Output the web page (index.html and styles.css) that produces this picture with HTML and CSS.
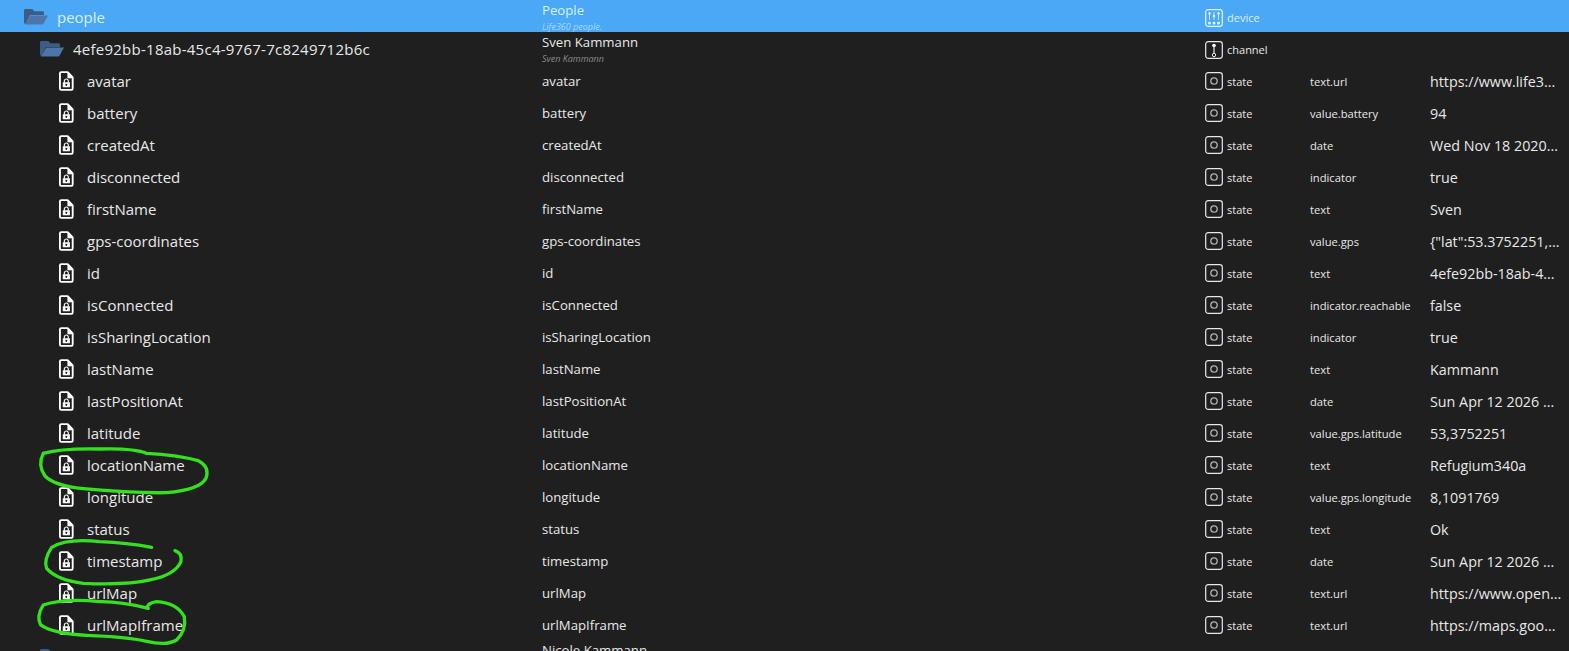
FILE: index.html
```html
<!DOCTYPE html>
<html lang="en">
  <head>
    <meta charset="UTF-8" />
    <title>Objects</title>
    <link rel="stylesheet" href="styles.css">
  </head>
  <body>
    <svg class="defs" width="0" height="0">
      <symbol id="folder" viewBox="0 0 26 17">
        <path fill="#3c5c85" d="M1 15V2.500C1 1.500 1.600 1 2.500 1h6c.8 0 1.300.3 1.800 1l1 1.200h8.200c1 0 1.500.6 1.500 1.500V7H7L2.500 16z"/>
        <path fill="#4d76a8" d="M7.200 7.400H25L20.600 15.600c-.3.5-.7.9-1.400.9H2z"/>
      </symbol>
      <symbol id="file" viewBox="0 0 16 21">
        <path fill="none" stroke="#fff" stroke-width="2" stroke-linejoin="round" d="M2.400 1h6.800l5.400 5.600v12c0 .9-.6 1.400-1.400 1.400H2.400c-.8 0-1.400-.5-1.400-1.400V2.400C1 1.500 1.600 1 2.400 1z"/>
        <path fill="#fff" d="M9 1h1l5 5v1.500H9z"/>
        <path fill="none" stroke="#fff" stroke-width="1.200" d="M5.700 12V10.500a2.100 2.100 0 0 1 4.200 0V12"/>
        <path fill="#fff" fill-rule="evenodd" d="M4 11.800h7.600v5.400H4zM7.800 13.500a1 1 0 1 0 .01 0z"/>
      </symbol>
      <symbol id="state" viewBox="0 0 18 18">
        <rect x=".7" y=".7" width="16.600" height="16.600" rx="2.500" fill="none" stroke="#e8e8e8" stroke-width="1.200"/>
        <circle cx="9" cy="9" r="3.200" fill="none" stroke="#b0b0b0" stroke-width="1.300"/>
      </symbol>
      <symbol id="channel" viewBox="0 0 18 18">
        <rect x=".7" y=".7" width="16.600" height="16.600" rx="2.500" fill="none" stroke="#e8e8e8" stroke-width="1.200"/>
        <circle cx="9" cy="4.500" r="1.800" fill="#fff"/>
        <path stroke="#e8e8e8" stroke-width="1.200" d="M9 5v7"/>
        <circle cx="9" cy="14" r="1.700" fill="none" stroke="#e8e8e8"/>
      </symbol>
      <symbol id="device" viewBox="0 0 18 18">
        <rect x=".7" y=".7" width="16.600" height="16.600" rx="2.500" fill="none" stroke="#e6f4ff" stroke-width="1.200"/>
        <g fill="#e6f4ff">
          <circle cx="4.500" cy="4.500" r="1.300"/><circle cx="9" cy="7" r="1.300"/><circle cx="13.500" cy="4.500" r="1.300"/>
          <circle cx="4.500" cy="14" r="1.500"/><circle cx="9" cy="14" r="1.500"/><circle cx="13.500" cy="14" r="1.500"/>
        </g>
        <path stroke="#e6f4ff" stroke-width=".8" d="M4.500 3v8M9 3v8M13.500 3v8"/>
      </symbol>
    </svg>

    <div class="tree">
      <div class="row selected">
        <div class="name level0"><svg class="ico-folder"><use href="#folder"/></svg><span class="folder-label">people</span></div>
        <div class="title two-line"><div>People</div><div class="sub">Life360 people.</div></div>
        <div class="type"><svg class="ico-role"><use href="#device"/></svg><span>device</span></div>
        <div class="role"></div>
        <div class="value"></div>
      </div>
      <div class="row">
        <div class="name level1"><svg class="ico-folder"><use href="#folder"/></svg><span class="folder-label uuid">4efe92bb-18ab-45c4-9767-7c8249712b6c</span></div>
        <div class="title two-line"><div>Sven Kammann</div><div class="sub">Sven Kammann</div></div>
        <div class="type"><svg class="ico-role"><use href="#channel"/></svg><span>channel</span></div>
        <div class="role"></div>
        <div class="value"></div>
      </div>
      <div class="row">
        <div class="name level2"><svg class="ico-file"><use href="#file"/></svg><span>avatar</span></div>
        <div class="title">avatar</div>
        <div class="type"><svg class="ico-role"><use href="#state"/></svg><span>state</span></div>
        <div class="role">text.url</div>
        <div class="value">https://www.life3...</div>
      </div>
      <div class="row">
        <div class="name level2"><svg class="ico-file"><use href="#file"/></svg><span>battery</span></div>
        <div class="title">battery</div>
        <div class="type"><svg class="ico-role"><use href="#state"/></svg><span>state</span></div>
        <div class="role">value.battery</div>
        <div class="value">94</div>
      </div>
      <div class="row">
        <div class="name level2"><svg class="ico-file"><use href="#file"/></svg><span>createdAt</span></div>
        <div class="title">createdAt</div>
        <div class="type"><svg class="ico-role"><use href="#state"/></svg><span>state</span></div>
        <div class="role">date</div>
        <div class="value">Wed Nov 18 2020...</div>
      </div>
      <div class="row">
        <div class="name level2"><svg class="ico-file"><use href="#file"/></svg><span>disconnected</span></div>
        <div class="title">disconnected</div>
        <div class="type"><svg class="ico-role"><use href="#state"/></svg><span>state</span></div>
        <div class="role">indicator</div>
        <div class="value">true</div>
      </div>
      <div class="row">
        <div class="name level2"><svg class="ico-file"><use href="#file"/></svg><span>firstName</span></div>
        <div class="title">firstName</div>
        <div class="type"><svg class="ico-role"><use href="#state"/></svg><span>state</span></div>
        <div class="role">text</div>
        <div class="value">Sven</div>
      </div>
      <div class="row">
        <div class="name level2"><svg class="ico-file"><use href="#file"/></svg><span>gps-coordinates</span></div>
        <div class="title">gps-coordinates</div>
        <div class="type"><svg class="ico-role"><use href="#state"/></svg><span>state</span></div>
        <div class="role">value.gps</div>
        <div class="value">{"lat":53.3752251,...</div>
      </div>
      <div class="row">
        <div class="name level2"><svg class="ico-file"><use href="#file"/></svg><span>id</span></div>
        <div class="title">id</div>
        <div class="type"><svg class="ico-role"><use href="#state"/></svg><span>state</span></div>
        <div class="role">text</div>
        <div class="value">4efe92bb-18ab-4...</div>
      </div>
      <div class="row">
        <div class="name level2"><svg class="ico-file"><use href="#file"/></svg><span>isConnected</span></div>
        <div class="title">isConnected</div>
        <div class="type"><svg class="ico-role"><use href="#state"/></svg><span>state</span></div>
        <div class="role">indicator.reachable</div>
        <div class="value">false</div>
      </div>
      <div class="row">
        <div class="name level2"><svg class="ico-file"><use href="#file"/></svg><span>isSharingLocation</span></div>
        <div class="title">isSharingLocation</div>
        <div class="type"><svg class="ico-role"><use href="#state"/></svg><span>state</span></div>
        <div class="role">indicator</div>
        <div class="value">true</div>
      </div>
      <div class="row">
        <div class="name level2"><svg class="ico-file"><use href="#file"/></svg><span>lastName</span></div>
        <div class="title">lastName</div>
        <div class="type"><svg class="ico-role"><use href="#state"/></svg><span>state</span></div>
        <div class="role">text</div>
        <div class="value">Kammann</div>
      </div>
      <div class="row">
        <div class="name level2"><svg class="ico-file"><use href="#file"/></svg><span>lastPositionAt</span></div>
        <div class="title">lastPositionAt</div>
        <div class="type"><svg class="ico-role"><use href="#state"/></svg><span>state</span></div>
        <div class="role">date</div>
        <div class="value">Sun Apr 12 2026 ...</div>
      </div>
      <div class="row">
        <div class="name level2"><svg class="ico-file"><use href="#file"/></svg><span>latitude</span></div>
        <div class="title">latitude</div>
        <div class="type"><svg class="ico-role"><use href="#state"/></svg><span>state</span></div>
        <div class="role">value.gps.latitude</div>
        <div class="value">53,3752251</div>
      </div>
      <div class="row">
        <div class="name level2"><svg class="ico-file"><use href="#file"/></svg><span>locationName</span></div>
        <div class="title">locationName</div>
        <div class="type"><svg class="ico-role"><use href="#state"/></svg><span>state</span></div>
        <div class="role">text</div>
        <div class="value">Refugium340a</div>
      </div>
      <div class="row">
        <div class="name level2"><svg class="ico-file"><use href="#file"/></svg><span>longitude</span></div>
        <div class="title">longitude</div>
        <div class="type"><svg class="ico-role"><use href="#state"/></svg><span>state</span></div>
        <div class="role">value.gps.longitude</div>
        <div class="value">8,1091769</div>
      </div>
      <div class="row">
        <div class="name level2"><svg class="ico-file"><use href="#file"/></svg><span>status</span></div>
        <div class="title">status</div>
        <div class="type"><svg class="ico-role"><use href="#state"/></svg><span>state</span></div>
        <div class="role">text</div>
        <div class="value">Ok</div>
      </div>
      <div class="row">
        <div class="name level2"><svg class="ico-file"><use href="#file"/></svg><span>timestamp</span></div>
        <div class="title">timestamp</div>
        <div class="type"><svg class="ico-role"><use href="#state"/></svg><span>state</span></div>
        <div class="role">date</div>
        <div class="value">Sun Apr 12 2026 ...</div>
      </div>
      <div class="row">
        <div class="name level2"><svg class="ico-file"><use href="#file"/></svg><span>urlMap</span></div>
        <div class="title">urlMap</div>
        <div class="type"><svg class="ico-role"><use href="#state"/></svg><span>state</span></div>
        <div class="role">text.url</div>
        <div class="value">https://www.open...</div>
      </div>
      <div class="row">
        <div class="name level2"><svg class="ico-file"><use href="#file"/></svg><span>urlMapIframe</span></div>
        <div class="title">urlMapIframe</div>
        <div class="type"><svg class="ico-role"><use href="#state"/></svg><span>state</span></div>
        <div class="role">text.url</div>
        <div class="value">https://maps.goo...</div>
      </div>
      <div class="row">
        <div class="name level1"><svg class="ico-folder"><use href="#folder"/></svg></div>
        <div class="title two-line"><div>Nicole Kammann</div></div>
        <div class="type"></div>
        <div class="role"></div>
        <div class="value"></div>
      </div>
    </div>

    <!-- green marker circles drawn over the tree -->
    <svg class="marks" viewBox="0 0 1569 651">
      <g transform="translate(0 440) scale(.3333)">
        <path d="M130 40Q112 75 135 108Q165 138 250 146Q400 160 500 158Q600 150 618 115Q630 80 595 62Q530 44 440 40Q400 24 300 27Q190 24 130 40"/>
        <path d="M455 322Q380 308 300 305Q200 294 155 322Q130 360 140 385Q170 420 250 430Q380 436 450 420Q525 405 543 365Q548 340 525 332"/>
        <path d="M445 505Q360 484 300 485Q190 474 130 495Q108 530 122 555Q160 582 260 586Q380 590 440 604Q500 618 530 600Q560 570 553 530Q530 488 470 485Q440 490 442 505"/>
      </g>
    </svg>
  </body>
</html>
```

FILE: styles.css
```css
html,
body {
  margin: 0;
  padding: 0;
  height: 651px;
  overflow: hidden;
  background-color: #1f1f1f;
}

body {
  font-family: "Open Sans", "Noto Sans", sans-serif;
  color: #e8e8e8;
  position: relative;
}

.defs {
  display: block;
  height: 0;
}

.row {
  display: grid;
  grid-template-columns: 542px 661px 107px 120px 139px;
  box-sizing: border-box;
  height: 32px;
  padding-top: 2px;
  align-items: center;
  white-space: nowrap;
}

.selected {
  background-color: #4aa8f6;
  color: #d8f0ff;
}

.name {
  display: flex;
  align-items: center;
  font-size: 15px;
}

.level0 {
  padding-left: 23px;
}

.level1 {
  padding-left: 39px;
}

.level2 {
  padding-left: 59px;
}

.folder-label {
  margin-bottom: 2px;
}

.uuid {
  letter-spacing: 0.25px;
}

.ico-folder {
  width: 26px;
  height: 17px;
  margin: 0 8px 2px 0;
  flex: none;
}

.ico-file {
  width: 15px;
  height: 20px;
  margin-right: 13px;
  flex: none;
}

.title {
  font-size: 13.2px;
  line-height: 20px;
}

.two-line {
  align-self: start;
  margin-top: -2px;
}

.sub {
  font-size: 9px;
  font-style: italic;
  line-height: 12px;
  margin-top: 1px;
  color: #8c8c8c;
}

.selected .sub {
  color: #a5d8fb;
}

.type {
  display: flex;
  align-items: center;
  font-size: 11px;
}

.ico-role {
  width: 18px;
  height: 18px;
  margin: 0 4px 0 2px;
  flex: none;
}

.role {
  font-size: 11.2px;
}

.value {
  font-size: 14.3px;
}

.marks {
  position: absolute;
  left: 0;
  top: 0;
  width: 1569px;
  height: 651px;
  fill: none;
  stroke: #35e01f;
  stroke-width: 10;
  stroke-linecap: round;
  stroke-linejoin: round;
}
```
